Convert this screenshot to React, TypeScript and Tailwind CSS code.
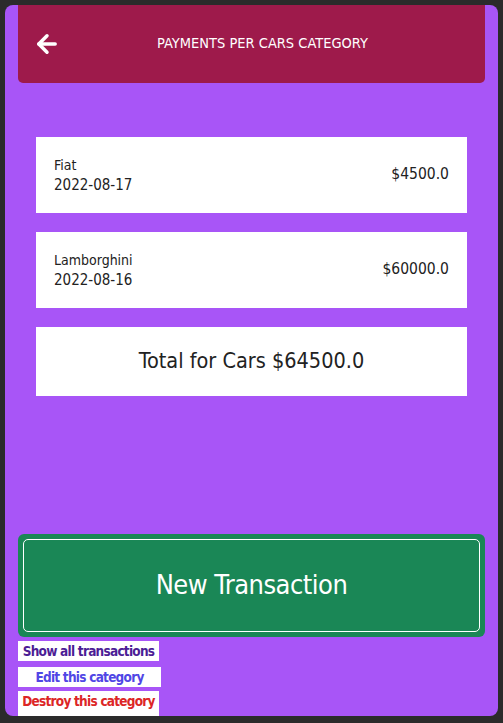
import { ArrowLeft } from "lucide-react";

const payments = [
  { name: "Fiat", date: "2022-08-17", amount: "$4500.0" },
  { name: "Lamborghini", date: "2022-08-16", amount: "$60000.0" },
];

export default function App() {
  return (
    <div
      className="h-[723px] bg-[#2b2b2b] px-[5px] pt-[5px] pb-[7px]"
      style={{ fontFamily: '"DejaVu Sans Condensed", "Liberation Sans", sans-serif' }}
    >
      <div className="flex h-full flex-col rounded-[8px] bg-[#a855f7] px-[13px]">
        <header className="relative flex h-[78px] items-center justify-center rounded-b-[5px] bg-[#9e1a4b] text-white">
          <ArrowLeft className="absolute left-[15px] top-[25px] h-[28px] w-[28px]" strokeWidth={3} />
          <h1 className="pl-[22px] text-[14.5px]">PAYMENTS PER CARS CATEGORY</h1>
        </header>

        <div className="mt-[54px] flex flex-col gap-[19px] px-[18px] text-[#222]">
          {payments.map((p) => (
            <div key={p.name} className="flex h-[76px] items-center justify-between bg-white px-[18px]">
              <div className="text-[15px] leading-[20px]">
                <p className="text-[14px]">{p.name}</p>
                <p>{p.date}</p>
              </div>
              <p className="text-[15.5px]">{p.amount}</p>
            </div>
          ))}
          <div className="flex h-[69px] items-center justify-center bg-white text-[21.5px]">
            Total for Cars $64500.0
          </div>
        </div>

        <div className="mt-auto">
          <button className="block h-[103px] w-full rounded-[6px] bg-[#1a8756] p-[5px]">
            <span className="flex h-full w-full items-center justify-center rounded-[5px] border border-white text-[27px] tracking-[-0.5px] text-white">
              New Transaction
            </span>
          </button>
          <div className="flex flex-col items-start pt-[4px] text-[13.5px] font-bold leading-[20px] tracking-[-0.75px]">
            <a className="w-[141px] bg-white text-center text-[#4c1d95]">Show all transactions</a>
            <a className="mt-[6px] w-[143px] bg-white text-center text-[#5046e5]">Edit this category</a>
            <a className="mt-[4px] w-[141px] bg-white pb-[5px] text-center text-[#dc2626]">Destroy this category</a>
          </div>
        </div>
      </div>
    </div>
  );
}
